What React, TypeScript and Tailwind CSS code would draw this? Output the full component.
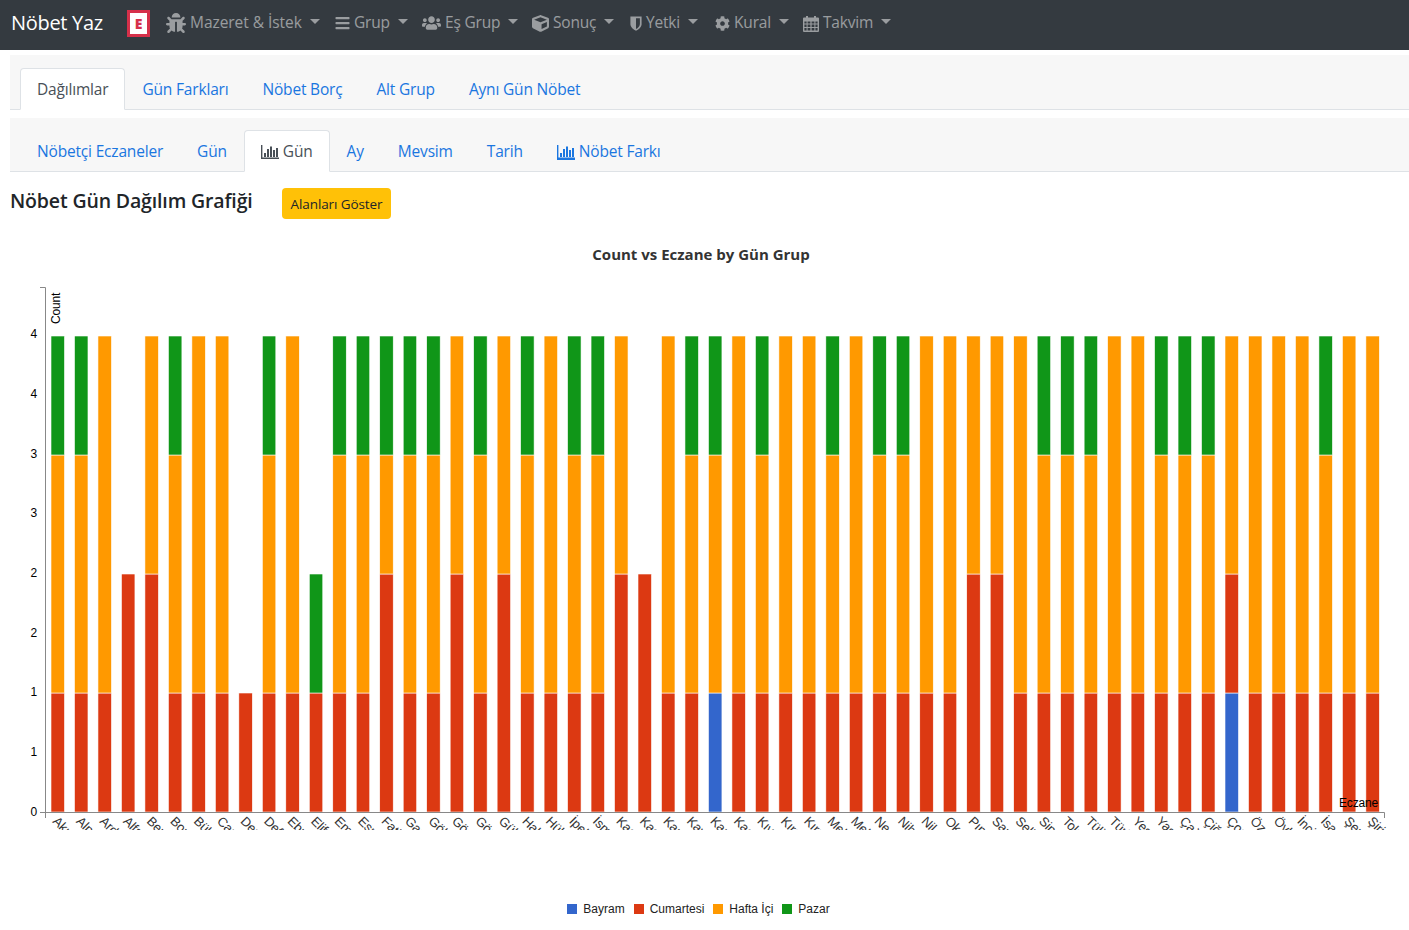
import React from 'react';
import { FaBug, FaBars, FaUsers, FaCube, FaCog } from 'react-icons/fa';

const UI_FONT = "font-['Open_Sans',sans-serif]";

function ShieldIcon({ className }: { className?: string }) {
  return (
    <svg viewBox="0 0 12 15" className={className} fill="currentColor">
      <path d="M0.4 0.6H11.6V8C11.6 11.2 8.4 13.6 6 14.8C3.6 13.6 0.4 11.2 0.4 8Z" />
      <path d="M6 2.2H9.9V7.9C9.9 10.1 7.8 12 6 13Z" fill="#343a40" />
    </svg>
  );
}

function CalendarIcon({ className }: { className?: string }) {
  return (
    <svg viewBox="0 0 16 17" className={className} fill="currentColor">
      <path
        fillRule="evenodd"
        d="M1 2.5H3V1H5V2.5H11V1H13V2.5H15A1 1 0 0 1 16 3.5V16A1 1 0 0 1 15 17H1A1 1 0 0 1 0 16V3.5A1 1 0 0 1 1 2.5ZM1.4 6.4V8.6H3.6V6.4ZM4.6 6.4V8.6H7.4V6.4ZM8.6 6.4V8.6H11.4V6.4ZM12.4 6.4V8.6H14.6V6.4ZM1.4 9.6V12H3.6V9.6ZM4.6 9.6V12H7.4V9.6ZM8.6 9.6V12H11.4V9.6ZM12.4 9.6V12H14.6V9.6ZM1.4 13V15.6H3.6V13ZM4.6 13V15.6H7.4V13ZM8.6 13V15.6H11.4V13ZM12.4 13V15.6H14.6V13Z"
      />
    </svg>
  );
}

// widths keep each menu item on the reference's grid
const MENU = [
  { label: 'Mazeret & İstek', icon: FaBug, size: 'w-[20px] h-[20px]', width: 'w-[169px] tracking-[-0.05px]' },
  { label: 'Grup', icon: FaBars, size: 'w-[15px] h-[16px]', width: 'w-[87px]' },
  { label: 'Eş Grup', icon: FaUsers, size: 'w-[19px] h-[18px]', width: 'w-[110px]' },
  { label: 'Sonuç', icon: FaCube, size: 'w-[17px] h-[17px]', width: 'w-[98px]' },
  { label: 'Yetki', icon: ShieldIcon, size: 'w-[12px] h-[15px]', width: 'w-[85px]' },
  { label: 'Kural', icon: FaCog, size: 'w-[15px] h-[15px]', width: 'w-[88px]' },
  { label: 'Takvim', icon: CalendarIcon, size: 'w-[16px] h-[17px]', width: 'w-[104px]' },
];

const COLORS = { b: '#3366cc', c: '#dc3912', h: '#ff9900', p: '#109618' };

// [bayram, cumartesi, hafta ici, pazar] in half units, bottom to top
const A: number[] = [0, 1, 2, 1];
const B: number[] = [0, 1, 3, 0];
const C: number[] = [0, 2, 2, 0];

const BARS: { name: string; v: number[] }[] = [
  { name: 'Akın', v: A },
  { name: 'Alp', v: A },
  { name: 'Arda', v: B },
  { name: 'Alfa', v: [0, 2, 0, 0] },
  { name: 'Beren', v: C },
  { name: 'Bora', v: A },
  { name: 'Bülent', v: B },
  { name: 'Can', v: B },
  { name: 'Deniz', v: [0, 1, 0, 0] },
  { name: 'Defne', v: A },
  { name: 'Ebru', v: B },
  { name: 'Elif', v: [0, 1, 0, 1] },
  { name: 'Emre', v: A },
  { name: 'Esra', v: A },
  { name: 'Fatih', v: [0, 2, 1, 1] },
  { name: 'Gamze', v: A },
  { name: 'Gökçe', v: A },
  { name: 'Gönül', v: C },
  { name: 'Görkem', v: A },
  { name: 'Gülay', v: C },
  { name: 'Hakan', v: A },
  { name: 'Hülya', v: B },
  { name: 'İpek', v: A },
  { name: 'İsmail', v: A },
  { name: 'Kaan', v: C },
  { name: 'Kadir', v: [0, 2, 0, 0] },
  { name: 'Kamil', v: B },
  { name: 'Kaya', v: A },
  { name: 'Kazım', v: [1, 0, 2, 1] },
  { name: 'Kaan', v: B },
  { name: 'Kıvanç', v: A },
  { name: 'Kırca', v: B },
  { name: 'Kıral', v: B },
  { name: 'Mehmet', v: A },
  { name: 'Melek', v: B },
  { name: 'Necla', v: A },
  { name: 'Nihal', v: A },
  { name: 'Nil', v: B },
  { name: 'Okan', v: B },
  { name: 'Pınar', v: C },
  { name: 'Sarp', v: C },
  { name: 'Selin', v: B },
  { name: 'Sinan', v: A },
  { name: 'Tolga', v: A },
  { name: 'Tülin', v: A },
  { name: 'Türkan', v: B },
  { name: 'Yeşim', v: B },
  { name: 'Yasin', v: A },
  { name: 'Çağla', v: A },
  { name: 'Çiğdem', v: A },
  { name: 'Çoşkun', v: [1, 1, 2, 0] },
  { name: 'Özge', v: B },
  { name: 'Öykü', v: B },
  { name: 'İnci', v: B },
  { name: 'İsa', v: A },
  { name: 'Şener', v: B },
  { name: 'Şirin', v: B },
];

const Y_TICKS = [
  { y: 812, t: '0' },
  { y: 752, t: '1' },
  { y: 692, t: '1' },
  { y: 633, t: '2' },
  { y: 573, t: '2' },
  { y: 513, t: '3' },
  { y: 454, t: '3' },
  { y: 394, t: '4' },
  { y: 334, t: '4' },
];

const UNIT = 119;
const BASE = 812;

function BarIcon() {
  return (
    <svg viewBox="0 0 18 14" className="w-[18px] h-[14px]" fill="currentColor">
      <path d="M0 0h1.4v12.6H18V14H0z" />
      <rect x="3" y="8" width="2" height="4" />
      <rect x="6" y="4" width="2" height="8" />
      <rect x="9" y="1.5" width="2" height="10.5" />
      <rect x="12" y="5" width="2" height="7" />
      <rect x="15" y="3" width="2" height="9" />
    </svg>
  );
}

function Chart() {
  const series: (keyof typeof COLORS)[] = ['b', 'c', 'h', 'p'];
  return (
    <svg viewBox="0 280 1409 560" className="block w-[1409px] h-[560px]">
      <defs>
        <clipPath id="labels">
          <rect x="40" y="813" width="1350" height="17" />
        </clipPath>
      </defs>
      {BARS.map((bar, i) => {
        const x = 51 + i * 23.48;
        let top = BASE;
        return (
          <g key={i}>
            {bar.v.map((n, s) => {
              if (!n) return null;
              const h = n * UNIT;
              top -= h;
              return (
                <rect key={s} x={x} y={top} width={13.5} height={h} fill={COLORS[series[s]]} stroke="#fff" strokeWidth={0.6} />
              );
            })}
          </g>
        );
      })}
      <path d="M40 287.5H45.5V812.5M40 812.5H1384.5V818M45.5 812.5V818" fill="none" stroke="#888" strokeWidth={1} />
      {Y_TICKS.map((t) => (
        <text key={t.y} x={37} y={t.y + 4} textAnchor="end" fontFamily="'Liberation Sans',sans-serif" fontSize={12} fill="#000">
          {t.t}
        </text>
      ))}
      <text transform="translate(60 324) rotate(-90)" fontFamily="'Liberation Sans',sans-serif" fontSize={12} fill="#000">
        Count
      </text>
      <text x={1339} y={807} fontFamily="'Liberation Sans',sans-serif" fontSize={12} fill="#000">
        Eczane
      </text>
      <g clipPath="url(#labels)">
        {BARS.map((bar, i) => (
          <text
            key={i}
            transform={`translate(${52 + i * 23.48} 822) rotate(45)`}
            fontFamily="'Liberation Sans',sans-serif"
            fontSize={13}
            fill="#333"
          >
            {bar.name}
          </text>
        ))}
      </g>
    </svg>
  );
}

function Tab({ active, children }: { active?: boolean; children: React.ReactNode }) {
  return (
    <a
      className={`flex items-center h-[42px] pt-[2px] px-[16px] -mb-px rounded-t border whitespace-nowrap ${
        active ? 'bg-white border-[#dee2e6] border-b-white text-[#495057]' : 'border-transparent text-[#1a76e0]'
      }`}
    >
      {children}
    </a>
  );
}

const LEGEND = [
  { label: 'Bayram', color: 'bg-[#3366cc]' },
  { label: 'Cumartesi', color: 'bg-[#dc3912]' },
  { label: 'Hafta İçi', color: 'bg-[#ff9900]' },
  { label: 'Pazar', color: 'bg-[#109618]' },
];

export default function App() {
  return (
    <div className={`${UI_FONT} w-[1409px] h-[930px] overflow-hidden bg-white text-[15.5px] tracking-[-0.18px] text-[#212529]`}>
      <nav className="flex items-center h-[50px] bg-[#343a40] pl-[11px] pb-[4px]">
        <span className="text-[20px] tracking-[-0.3px] text-white w-[116px]">Nöbet Yaz</span>
        <span className="flex items-center justify-center w-[23px] h-[27px] bg-white border-[3px] border-[#d6304a] text-[14px] font-extrabold text-[#d6304a] mr-[8px] mt-[1px]">
          E
        </span>
        {MENU.map((m) => {
          const Icon = m.icon;
          return (
            <a key={m.label} className={`flex items-center shrink-0 whitespace-nowrap px-[8px] text-[rgba(255,255,255,0.5)] ${m.width}`}>
              <Icon className={`${m.size} mr-[4px] shrink-0`} />
              <span>{m.label}</span>
              <span className="ml-[8px] -mt-[4px] border-x-[5px] border-t-[5px] border-x-transparent border-t-[rgba(255,255,255,0.5)]" />
            </a>
          );
        })}
      </nav>

      <div className="pt-[5px] pl-[10px]">
        <div className="flex items-end h-[55px] bg-[#f7f7f7] border-b border-[#dee2e6] pl-[10px]">
          <Tab active>Dağılımlar</Tab>
          <Tab>Gün Farkları</Tab>
          <Tab>Nöbet Borç</Tab>
          <Tab>Alt Grup</Tab>
          <Tab>Aynı Gün Nöbet</Tab>
        </div>
        <div className="flex items-end h-[54px] mt-[8px] bg-[#f7f7f7] border-b border-[#dee2e6] pl-[10px]">
          <Tab>Nöbetçi Eczaneler</Tab>
          <Tab>Gün</Tab>
          <Tab active>
            <span className="mr-[4px]"><BarIcon /></span>Gün
          </Tab>
          <Tab>Ay</Tab>
          <Tab>Mevsim</Tab>
          <Tab>Tarih</Tab>
          <Tab>
            <span className="mr-[4px] border-b border-[#1a76e0]"><BarIcon /></span>Nöbet Farkı
          </Tab>
        </div>
        <div className="flex items-center mt-[16px] h-[31px]">
          <h5 className="text-[19.5px] font-semibold tracking-[-0.15px] w-[272px] -mt-[5px]">Nöbet Gün Dağılım Grafiği</h5>
          <button className="h-[31px] w-[109px] pt-px rounded bg-[#ffc107] text-[13.5px] tracking-[-0.1px] text-[#212529]">Alanları Göster</button>
        </div>
        <div className="w-[1382px] text-center text-[15px] font-bold tracking-normal text-[#333] mt-[25px] leading-[20px]">
          Count vs Eczane by Gün Grup
        </div>
      </div>

      <div className="mt-[16px]">
        <Chart />
      </div>

      <div className="flex items-center justify-center gap-[9px] w-[1397px] mt-[60px] font-['Liberation_Sans',sans-serif] text-[12px] tracking-normal text-[#222]">
        {LEGEND.map((l) => (
          <span key={l.label} className="flex items-center gap-[6px]">
            <span className={`w-[10px] h-[10px] ${l.color}`} />
            {l.label}
          </span>
        ))}
      </div>
    </div>
  );
}
